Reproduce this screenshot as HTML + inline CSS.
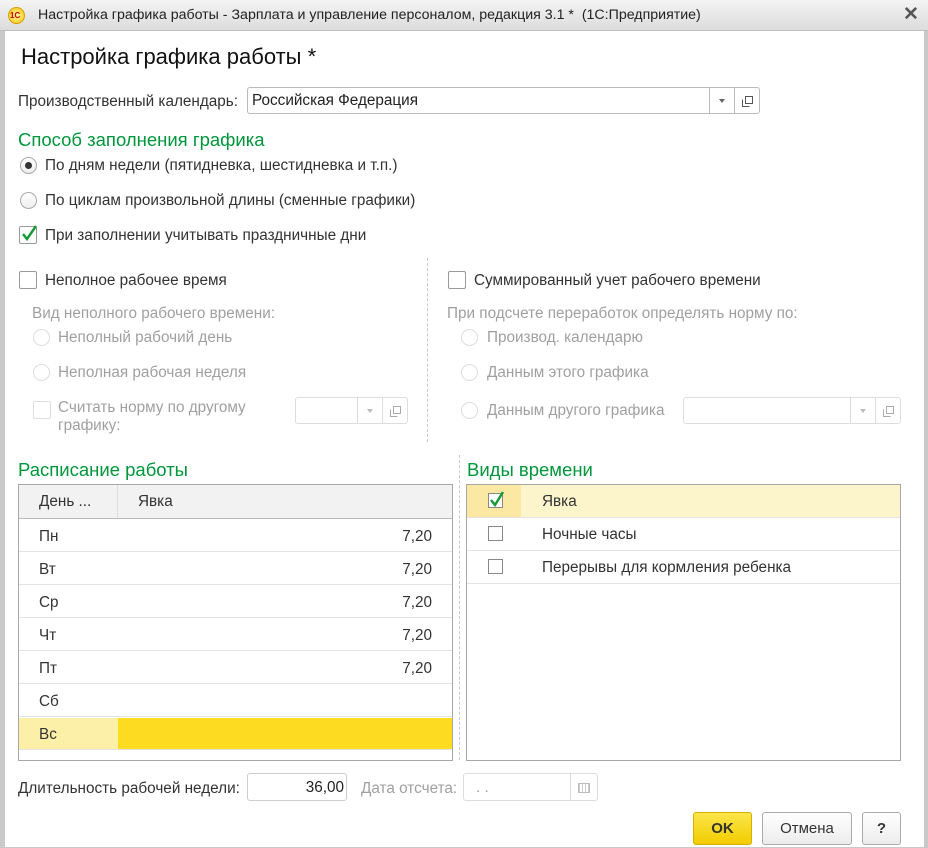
<!DOCTYPE html>
<html><head><meta charset="utf-8"><style>
*{box-sizing:border-box;margin:0;padding:0}
body{width:928px;height:848px;position:relative;overflow:hidden;background:#fff;font-family:"Liberation Sans",sans-serif;font-size:15.3px;line-height:21px;color:#333}
.a{position:absolute;white-space:nowrap}
.g{color:#a0a0a0}
.h{color:#00963c;font-size:18.5px;line-height:24px}
.rb{position:absolute;width:17px;height:17px;border:1px solid #aaa;border-radius:50%;background:linear-gradient(#fff,#eee)}
.rb.d{border-color:#ddd;background:#fff}
.cb{position:absolute;width:18px;height:18px;border:1px solid #999;border-radius:2px;background:#fff}
.cb.d{border-color:#ddd}
.inp{position:absolute;border:1px solid #bbb;border-radius:3px;background:#fff;height:27px}
.inp.d{border-color:#ddd}
.btn{position:absolute;top:0;height:100%;width:25px;border-left:1px solid #bbb}
.inp.d .btn{border-left-color:#ddd}
.tri{position:absolute;left:9px;top:11px;border:3.5px solid transparent;border-top:4px solid #666;border-bottom:0}
.inp.d .tri{border-top-color:#bbb}
.tbl{position:absolute;border:1px solid #a8a8a8;background:#fff}
.row{position:absolute;left:0;right:0;height:33px;border-bottom:1px solid #e3e3e3}
.dash{position:absolute;border-left:1px dashed #c8c8c8;width:0}
.pb{position:absolute;height:33px;border:1px solid #aaa;border-radius:3px;background:linear-gradient(#fff,#ececec);text-align:center;line-height:31px;font-size:15px}
</style></head><body>
<div class="a" style="left:0;top:0;width:928px;height:848px;border-left:5px solid #c9c9c9;border-right:4px solid #c9c9c9;border-bottom:1px solid #c9c9c9"></div>
<div class="a" style="left:0;top:0;width:928px;height:31px;background:linear-gradient(#f4f4f4,#dcdcdc);border-bottom:1px solid #c0c0c0"></div>
<div class="a" style="left:8px;top:7px;width:17px;height:17px;border-radius:50%;background:radial-gradient(#fff6a8,#f4c400);border:1px solid #d8a000"></div>
<div class="a" style="left:10px;top:5px;font-size:8px;font-weight:bold;color:#c00">1С</div>
<div class="a" style="left:38px;top:5px;font-size:14.2px;color:#222">Настройка графика работы - Зарплата и управление персоналом, редакция 3.1 *&nbsp; (1С:Предприятие)</div>
<div class="a" style="left:903px;top:4px;font-size:19px;font-weight:bold;color:#555">✕</div>

<div class="a" style="left:21px;top:43px;font-size:22px;line-height:28px;color:#111">Настройка графика работы *</div>

<div class="a" style="left:18px;top:91px">Производственный календарь:</div>
<div class="inp" style="left:247px;top:87px;width:513px"><div class="a" style="left:4px;top:2px;color:#222">Российская Федерация</div>
<div class="btn" style="right:25px"><div class="tri"></div></div>
<div class="btn" style="right:0"><svg class="a" style="left:7px;top:8px" width="11" height="11"><rect x="3.5" y="0.5" width="7" height="7" fill="none" stroke="#555"/><path d="M0.5 3.5V10.5H7.5" fill="none" stroke="#555"/></svg></div></div>

<div class="a h" style="left:18px;top:128px">Способ заполнения графика</div>
<div class="rb" style="left:20px;top:157px"></div><div class="a" style="left:25px;top:162px;width:7px;height:7px;border-radius:50%;background:#333"></div>
<div class="a" style="left:45px;top:155px">По дням недели (пятидневка, шестидневка и т.п.)</div>
<div class="rb" style="left:20px;top:192px"></div>
<div class="a" style="left:45px;top:190px">По циклам произвольной длины (сменные графики)</div>
<div class="cb" style="left:19px;top:226px"></div>
<svg class="a" style="left:20px;top:224px" width="18" height="19"><path d="M3 10L7 15L16 2" fill="none" stroke="#1a9a3a" stroke-width="2.5"/></svg>
<div class="a" style="left:45px;top:225px">При заполнении учитывать праздничные дни</div>

<div class="dash" style="left:427px;top:258px;height:184px"></div>
<div class="cb" style="left:19px;top:271px"></div>
<div class="a" style="left:45px;top:270px">Неполное рабочее время</div>
<div class="a g" style="left:32px;top:303px">Вид неполного рабочего времени:</div>
<div class="rb d" style="left:33px;top:329px"></div><div class="a g" style="left:58px;top:327px">Неполный рабочий день</div>
<div class="rb d" style="left:33px;top:364px"></div><div class="a g" style="left:58px;top:362px">Неполная рабочая неделя</div>
<div class="cb d" style="left:33px;top:401px"></div><div class="a g" style="left:58px;top:399px;line-height:18px">Считать норму по другому<br>графику:</div>
<div class="inp d" style="left:295px;top:397px;width:113px"><div class="btn" style="right:25px"><div class="tri"></div></div><div class="btn" style="right:0"><svg class="a" style="left:7px;top:8px" width="11" height="11"><rect x="3.5" y="0.5" width="7" height="7" fill="none" stroke="#aaa"/><path d="M0.5 3.5V10.5H7.5" fill="none" stroke="#aaa"/></svg></div></div>

<div class="cb" style="left:448px;top:271px"></div>
<div class="a" style="left:474px;top:270px">Суммированный учет рабочего времени</div>
<div class="a g" style="left:447px;top:303px">При подсчете переработок определять норму по:</div>
<div class="rb d" style="left:461px;top:329px"></div><div class="a g" style="left:487px;top:327px">Производ. календарю</div>
<div class="rb d" style="left:461px;top:364px"></div><div class="a g" style="left:487px;top:362px">Данным этого графика</div>
<div class="rb d" style="left:461px;top:402px"></div><div class="a g" style="left:487px;top:400px">Данным другого графика</div>
<div class="inp d" style="left:683px;top:397px;width:218px"><div class="btn" style="right:25px"><div class="tri"></div></div><div class="btn" style="right:0"><svg class="a" style="left:7px;top:8px" width="11" height="11"><rect x="3.5" y="0.5" width="7" height="7" fill="none" stroke="#aaa"/><path d="M0.5 3.5V10.5H7.5" fill="none" stroke="#aaa"/></svg></div></div>

<div class="a h" style="left:18px;top:458px">Расписание работы</div>
<div class="tbl" style="left:18px;top:484px;width:435px;height:277px">
<div class="row" style="top:0;height:34px;background:#f2f2f2;border-bottom:1px solid #bbb"><div class="a" style="left:98px;top:0;height:100%;border-left:1px solid #ddd"></div><div class="a" style="left:20px;top:6px">День ...</div><div class="a" style="left:119px;top:6px">Явка</div></div>
<div class="row" style="top:34px"><div class="a" style="left:20px;top:7px">Пн</div><div class="a" style="right:20px;top:7px">7,20</div></div>
<div class="row" style="top:67px"><div class="a" style="left:20px;top:7px">Вт</div><div class="a" style="right:20px;top:7px">7,20</div></div>
<div class="row" style="top:100px"><div class="a" style="left:20px;top:7px">Ср</div><div class="a" style="right:20px;top:7px">7,20</div></div>
<div class="row" style="top:133px"><div class="a" style="left:20px;top:7px">Чт</div><div class="a" style="right:20px;top:7px">7,20</div></div>
<div class="row" style="top:166px"><div class="a" style="left:20px;top:7px">Пт</div><div class="a" style="right:20px;top:7px">7,20</div></div>
<div class="row" style="top:199px"><div class="a" style="left:20px;top:7px">Сб</div></div>
<div class="row" style="top:233px;height:32px;background:#fcf0a8"><div class="a" style="left:99px;top:0;right:0;height:100%;background:#fcdb20"></div><div class="a" style="left:20px;top:6px">Вс</div></div>
</div>

<div class="dash" style="left:459px;top:455px;height:305px"></div>
<div class="a h" style="left:467px;top:458px">Виды времени</div>
<div class="tbl" style="left:466px;top:484px;width:435px;height:277px">
<div class="row" style="top:0;height:33px;background:#fcf5cc"><div class="a" style="left:0;top:0;width:54px;height:100%;background:#fbe9a3"></div>
<div class="a" style="left:21px;top:8px;width:15px;height:15px;border:1px solid #888;background:#fff"></div>
<svg class="a" style="left:21px;top:5px" width="17" height="18"><path d="M3 10L7 15L15 2" fill="none" stroke="#1a9a3a" stroke-width="2.5"/></svg>
<div class="a" style="left:75px;top:6px">Явка</div></div>
<div class="row" style="top:33px"><div class="a" style="left:21px;top:8px;width:15px;height:15px;border:1px solid #888"></div><div class="a" style="left:75px;top:6px">Ночные часы</div></div>
<div class="row" style="top:66px"><div class="a" style="left:21px;top:8px;width:15px;height:15px;border:1px solid #888"></div><div class="a" style="left:75px;top:6px">Перерывы для кормления ребенка</div></div>
</div>

<div class="a" style="left:18px;top:778px">Длительность рабочей недели:</div>
<div class="inp" style="left:247px;top:773px;width:100px;height:28px;border-color:#ccc"><div class="a" style="right:2px;top:3px;color:#222">36,00</div></div>
<div class="a g" style="left:361px;top:778px">Дата отсчета:</div>
<div class="inp d" style="left:463px;top:773px;width:135px;height:28px"><div class="a g" style="left:12px;top:3px">. .</div><div class="btn" style="right:0;width:27px"><div class="a" style="left:7px;top:9px;width:12px;height:10px;border:1px solid #bbb;background:repeating-linear-gradient(90deg,#ccc 0 1px,transparent 1px 3px)"></div></div></div>

<div class="pb" style="left:693px;top:812px;width:59px;background:linear-gradient(#fbe64a,#f2cc00);border-color:#d4b000;font-weight:bold;color:#333">OK</div>
<div class="pb" style="left:762px;top:812px;width:90px">Отмена</div>
<div class="pb" style="left:862px;top:812px;width:39px;font-weight:bold">?</div>
</body></html>
